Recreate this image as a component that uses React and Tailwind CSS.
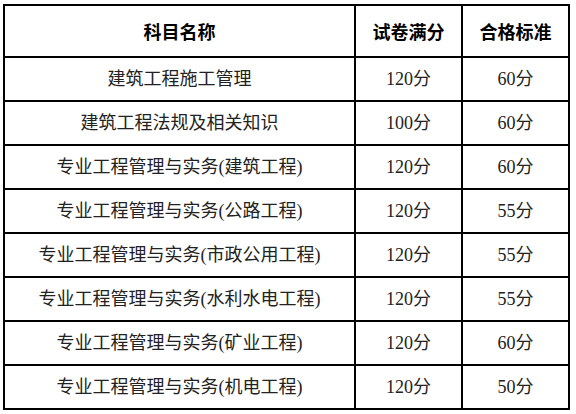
const rows = [
  { name: "建筑工程施工管理", full: "120分", pass: "60分" },
  { name: "建筑工程法规及相关知识", full: "100分", pass: "60分" },
  { name: "专业工程管理与实务(建筑工程)", full: "120分", pass: "60分" },
  { name: "专业工程管理与实务(公路工程)", full: "120分", pass: "55分" },
  { name: "专业工程管理与实务(市政公用工程)", full: "120分", pass: "55分" },
  { name: "专业工程管理与实务(水利水电工程)", full: "120分", pass: "55分" },
  { name: "专业工程管理与实务(矿业工程)", full: "120分", pass: "60分" },
  { name: "专业工程管理与实务(机电工程)", full: "120分", pass: "50分" },
];

export default function App() {
  return (
    <div className="h-[414px] w-[576px] bg-white pl-[3px] pt-[4px] font-['Liberation_Serif','Noto_Sans_CJK_SC',serif]">
      <table className="w-[567px] table-fixed border-collapse text-center">
        <colgroup>
          <col className="w-[351px]" />
          <col className="w-[107px]" />
          <col className="w-[107px]" />
        </colgroup>
        <thead>
          <tr className="h-[52px]">
            <th className="border-2 border-black font-['Noto_Sans_CJK_SC',sans-serif] text-[18px] font-bold text-black">
              科目名称
            </th>
            <th className="border-2 border-black font-['Noto_Sans_CJK_SC',sans-serif] text-[18px] font-bold text-black">
              试卷满分
            </th>
            <th className="border-2 border-black font-['Noto_Sans_CJK_SC',sans-serif] text-[18px] font-bold text-black">
              合格标准
            </th>
          </tr>
        </thead>
        <tbody className="text-[18px] text-[#222]">
          {rows.map((r) => (
            <tr key={r.name} className="h-[44px]">
              <td className="border-2 border-black">{r.name}</td>
              <td className="border-2 border-black">{r.full}</td>
              <td className="border-2 border-black">{r.pass}</td>
            </tr>
          ))}
        </tbody>
      </table>
    </div>
  );
}
